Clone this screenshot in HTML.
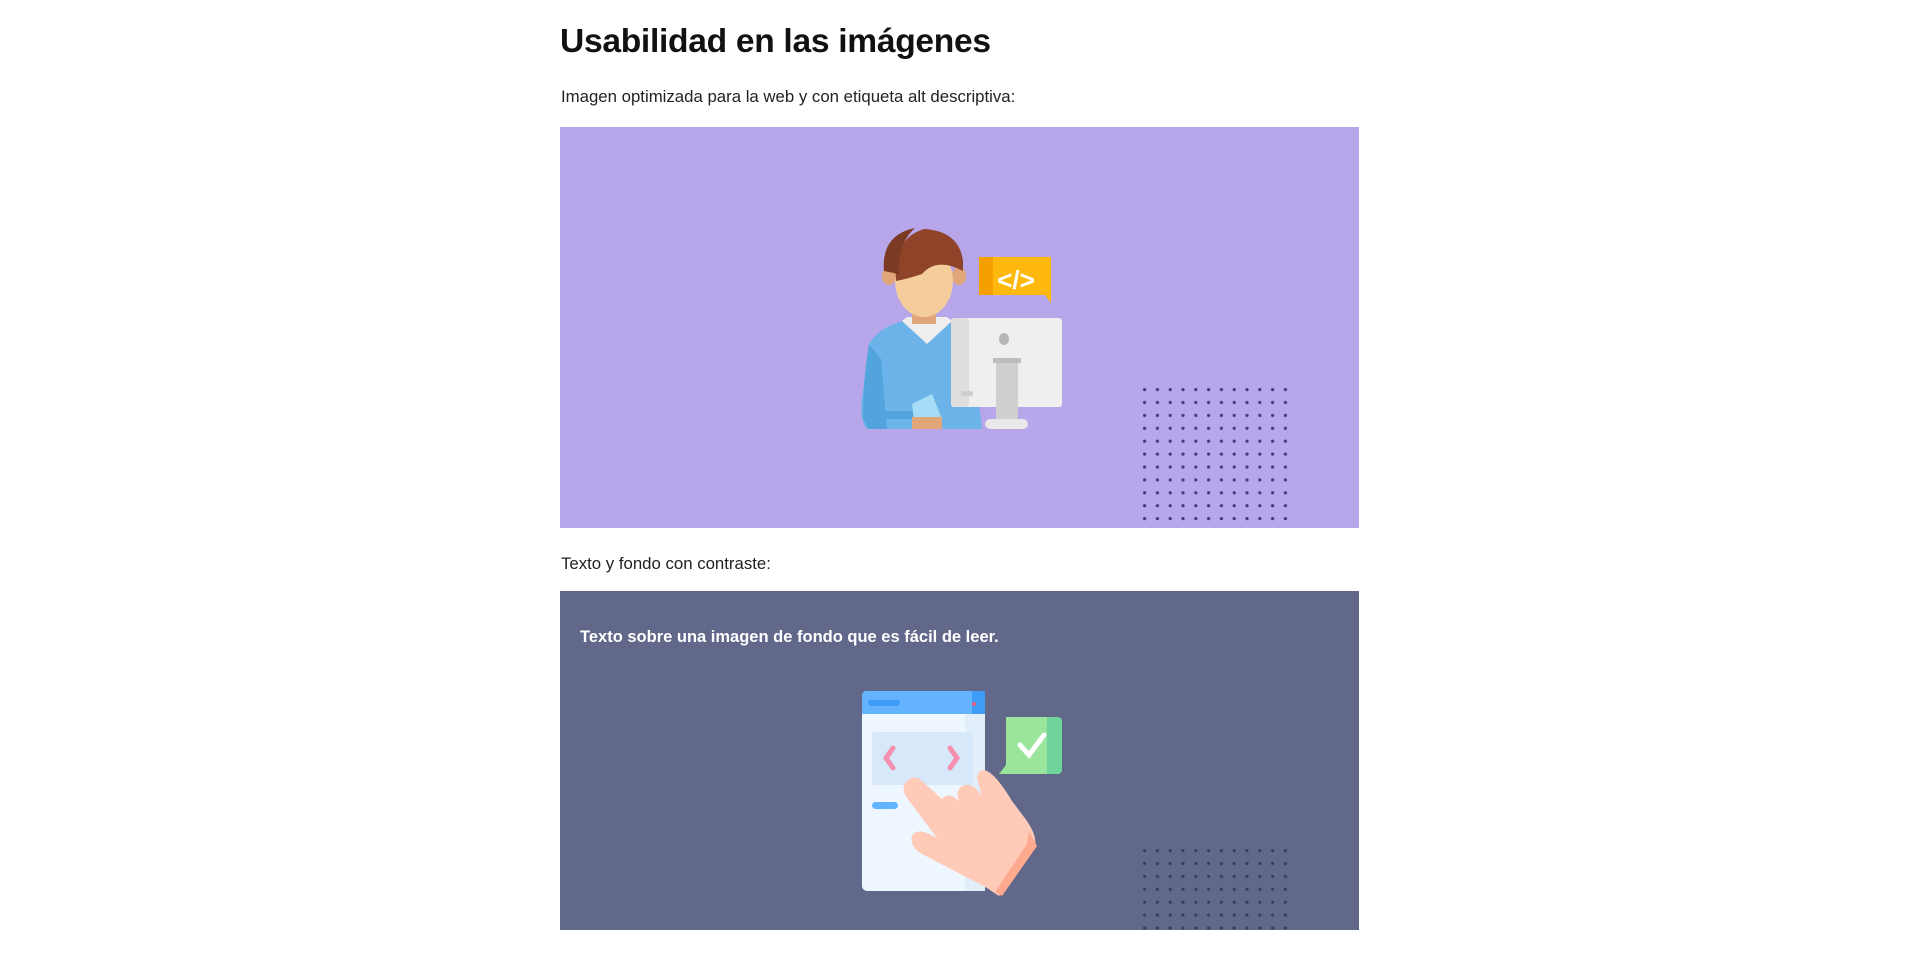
<!DOCTYPE html>
<html><head><meta charset="utf-8"><style>
body{margin:0;background:#fff;width:1920px;height:966px;position:relative;font-family:"Liberation Sans",sans-serif;color:#111;overflow:hidden}
.a{position:absolute}
h1{position:absolute;left:560px;top:23px;margin:0;font-size:33.6px;font-weight:bold;letter-spacing:-0.3px;color:#111}
.p{position:absolute;left:561px;font-size:16.8px;color:#222}
</style></head><body>
<h1>Usabilidad en las imágenes</h1>
<div class="p" style="top:87px">Imagen optimizada para la web y con etiqueta alt descriptiva:</div>
<div class="a" style="left:560px;top:127px;width:799px;height:401px;background:#b7a6ea"></div>
<div class="p" style="top:554px">Texto y fondo con contraste:</div>
<div class="a" style="left:560px;top:591px;width:799px;height:339px;background:#616889"></div>
<div class="a" style="left:580px;top:628px;font-size:16.5px;font-weight:bold;color:#fff">Texto sobre una imagen de fondo que es fácil de leer.</div>
<svg class="a" style="left:0;top:0" width="1920" height="966">
<defs>
<pattern id="d1" x="1143" y="388" width="12.8" height="12.9" patternUnits="userSpaceOnUse"><circle cx="1.6" cy="1.6" r="1.6" fill="#453a75"/></pattern>
<pattern id="d2" x="1143" y="849" width="12.8" height="12.9" patternUnits="userSpaceOnUse"><circle cx="1.6" cy="1.6" r="1.6" fill="#383d5f"/></pattern>
</defs>
<rect x="1142" y="387" width="146" height="141" fill="url(#d1)"/>
<rect x="1142" y="848" width="146" height="82" fill="url(#d2)"/>
<g transform="translate(-3,-1)">
<path d="M872 345 Q880 330 905 322 L950 322 Q965 330 975 345 L985 430 L870 430 Q862 420 865 400 Z" fill="#6bb3e8"/>
<path d="M872 345 Q866 380 866 420 L872 430 L890 430 L884 360 Z" fill="#52a5dc"/>
<rect x="878" y="412" width="40" height="8" fill="#52a5dc"/>
<path d="M905 322 L930 345 L955 322 L950 318 L910 318Z" fill="#eee"/>
<rect x="915" y="305" width="24" height="20" fill="#e0a678"/>
<path d="M915 405 L935 395 L945 420 L930 430 L918 430Z" fill="#a6dcf5"/>
<rect x="915" y="418" width="30" height="12" fill="#e0a678"/>
<ellipse cx="892" cy="277" rx="7" ry="9" fill="#e0a678"/>
<ellipse cx="962" cy="277" rx="7" ry="9" fill="#e0a678"/>
<ellipse cx="927" cy="282" rx="29" ry="36" fill="#f5cd9b"/>
<path d="M899 282 Q895 240 927 230 Q962 232 966 262 L966 272 Q940 258 925 275 Q910 280 899 282Z" fill="#8f442a"/>
<path d="M887 272 Q884 236 918 229 Q900 245 902 275 Z" fill="#7a3a24"/>
<rect x="954" y="319" width="111" height="89" rx="3" fill="#efefef"/>
<rect x="954" y="319" width="18" height="89" rx="3" fill="#dedede"/>
<ellipse cx="1007" cy="340" rx="5" ry="6" fill="#b5b5b5"/>
<rect x="999" y="359" width="22" height="62" fill="#cfcfcf"/>
<rect x="996" y="359" width="28" height="5" fill="#bdbdbd"/>
<rect x="988" y="420" width="43" height="10" rx="5" fill="#e8e8e8"/>
<rect x="964" y="392" width="12" height="5" rx="2" fill="#cfcfcf"/>
<path d="M982 258 H1054 V304 L1048 296 H982 Z" fill="#ffb80d"/>
<rect x="982" y="258" width="14" height="38" fill="#f5a000"/>
<text x="1019" y="290" text-anchor="middle" font-family="Liberation Sans" font-weight="bold" font-size="26" fill="#fff">&lt;/&gt;</text>
</g>
<g transform="translate(-3,-4)">
<rect x="865" y="695" width="123" height="200" rx="5" fill="#eef7ff"/>
<rect x="968" y="700" width="20" height="195" fill="#e2eefa"/>
<path d="M865 700 Q865 695 870 695 H983 Q988 695 988 700 V718 H865Z" fill="#64b3ff"/>
<rect x="975" y="695" width="13" height="23" fill="#3d9cf5"/>
<circle cx="977" cy="708" r="2" fill="#f0608a"/>
<rect x="871" y="704" width="32" height="6" rx="3" fill="#3d9cf5"/>
<rect x="875" y="736" width="101" height="53" rx="2" fill="#d6e8fa"/>
<path d="M896 752 L889 762 L896 772" stroke="#f58fb0" stroke-width="5" fill="none" stroke-linecap="round"/>
<path d="M953 752 L960 762 L953 772" stroke="#f58fb0" stroke-width="5" fill="none" stroke-linecap="round"/>
<rect x="875" y="806" width="26" height="7" rx="3.5" fill="#64b3ff"/>
<path d="M910 785 Q903 792 910 802 L940 842 Q920 830 915 840 Q912 850 925 858 L990 892 L1002 900 L1038 850 Q1040 840 1030 825 L1015 805 Q1000 780 990 775 Q982 772 980 782 L985 800 Q975 785 965 790 Q958 795 962 805 Q952 795 945 803 L925 785 Q918 778 910 785Z" fill="#ffcbb8"/>
<path d="M1032 835 L1040 850 L1005 900 L998 896 L1030 848Z" fill="#ffa98f"/>
<path d="M1009 721 H1060 Q1065 721 1065 726 V773 Q1065 778 1060 778 H1002 L1009 769Z" fill="#9be49b"/>
<path d="M1050 721 H1060 Q1065 721 1065 726 V773 Q1065 778 1060 778 H1050Z" fill="#6fd49b"/>
<path d="M1023 749 L1032 759 L1047 739" stroke="#fff" stroke-width="5" fill="none" stroke-linecap="round"/>
</g>
</svg>
</body></html>
